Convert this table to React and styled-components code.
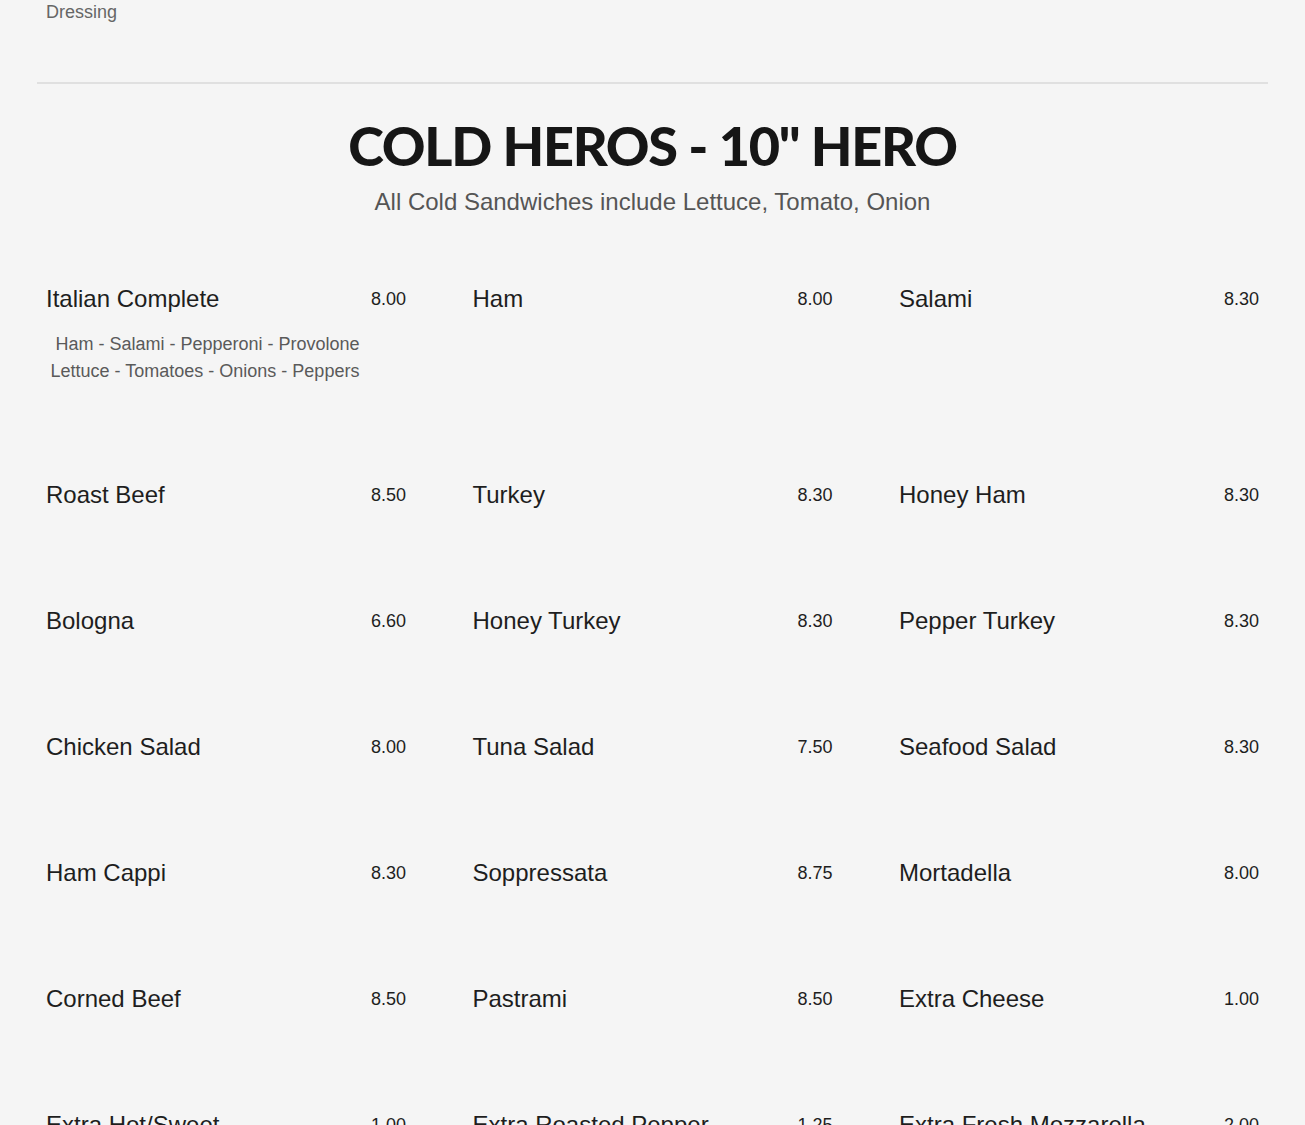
import React from 'react';
import styled, { createGlobalStyle } from 'styled-components';

const GlobalStyle = createGlobalStyle`
  body {
    margin: 0;
    background: #f5f5f5;
    font-family: "Liberation Sans", Arial, sans-serif;
  }
`;

const items = [
  { name: 'Italian Complete', price: '8.00', desc: ['\u00a0Ham - Salami - Pepperoni - Provolone', 'Lettuce - Tomatoes - Onions - Peppers'] },
  { name: 'Ham', price: '8.00' },
  { name: 'Salami', price: '8.30' },
  { name: 'Roast Beef', price: '8.50' },
  { name: 'Turkey', price: '8.30' },
  { name: 'Honey Ham', price: '8.30' },
  { name: 'Bologna', price: '6.60' },
  { name: 'Honey Turkey', price: '8.30' },
  { name: 'Pepper Turkey', price: '8.30' },
  { name: 'Chicken Salad', price: '8.00' },
  { name: 'Tuna Salad', price: '7.50' },
  { name: 'Seafood Salad', price: '8.30' },
  { name: 'Ham Cappi', price: '8.30' },
  { name: 'Soppressata', price: '8.75' },
  { name: 'Mortadella', price: '8.00' },
  { name: 'Corned Beef', price: '8.50' },
  { name: 'Pastrami', price: '8.50' },
  { name: 'Extra Cheese', price: '1.00' },
  { name: 'Extra Hot/Sweet', price: '1.00' },
  { name: 'Extra Roasted Pepper', price: '1.25' },
  { name: 'Extra Fresh Mozzarella', price: '2.00' },
];

const App = () => {
  return (
    <Page>
      <GlobalStyle />
      <PrevNote>Dressing</PrevNote>
      <Divider />
      <Section>
        <SectionTitle>COLD HEROS - 10" HERO</SectionTitle>
        <SectionSub>All Cold Sandwiches include Lettuce, Tomato, Onion</SectionSub>
        <MenuGrid>
          {items.map((item) => (
            <MenuItem key={item.name}>
              <ItemHead>
                <ItemName>{item.name}</ItemName>
                <ItemPrice>{item.price}</ItemPrice>
              </ItemHead>
              {item.desc && (
                <ItemDesc>
                  {item.desc.map((line) => (
                    <div key={line}>{line}</div>
                  ))}
                </ItemDesc>
              )}
            </MenuItem>
          ))}
        </MenuGrid>
      </Section>
    </Page>
  );
};

export default App;

const Page = styled.div`
  padding: 0 37px;
`;

const PrevNote = styled.div`
  padding: 2px 0 0 9px;
  font-size: 18px;
  line-height: 20px;
  color: #666;
`;

const Divider = styled.hr`
  margin: 60px 0 0;
  border: 0;
  border-top: 2px solid #e0e0e0;
`;

const Section = styled.div`
  padding: 30px 9px 0;
`;

const SectionTitle = styled.h2`
  margin: 0;
  text-align: center;
  font-family: Lato, "Liberation Sans", sans-serif;
  font-weight: 900;
  font-size: 54px;
  line-height: 64px;
  letter-spacing: -1.3px;
  color: #161616;
`;

const SectionSub = styled.div`
  margin-top: 10px;
  text-align: center;
  font-size: 24px;
  line-height: 28px;
  color: #555;
`;

const MenuGrid = styled.div`
  margin-top: 69px;
  display: grid;
  grid-template-columns: repeat(3, 360px);
  column-gap: 66.5px;
`;

const MenuItem = styled.div`
  padding-bottom: 98px;
`;

const ItemHead = styled.div`
  display: flex;
  justify-content: space-between;
  align-items: flex-start;
`;

const ItemName = styled.div`
  font-size: 24px;
  line-height: 28px;
  color: #1e1e1e;
`;

const ItemPrice = styled.div`
  margin-top: 3px;
  font-size: 18px;
  line-height: 22px;
  color: #1e1e1e;
`;

const ItemDesc = styled.div`
  width: 318px;
  margin: 18px 0 -2px;
  text-align: center;
  font-size: 18px;
  line-height: 27px;
  color: #5a5a5a;
`;
